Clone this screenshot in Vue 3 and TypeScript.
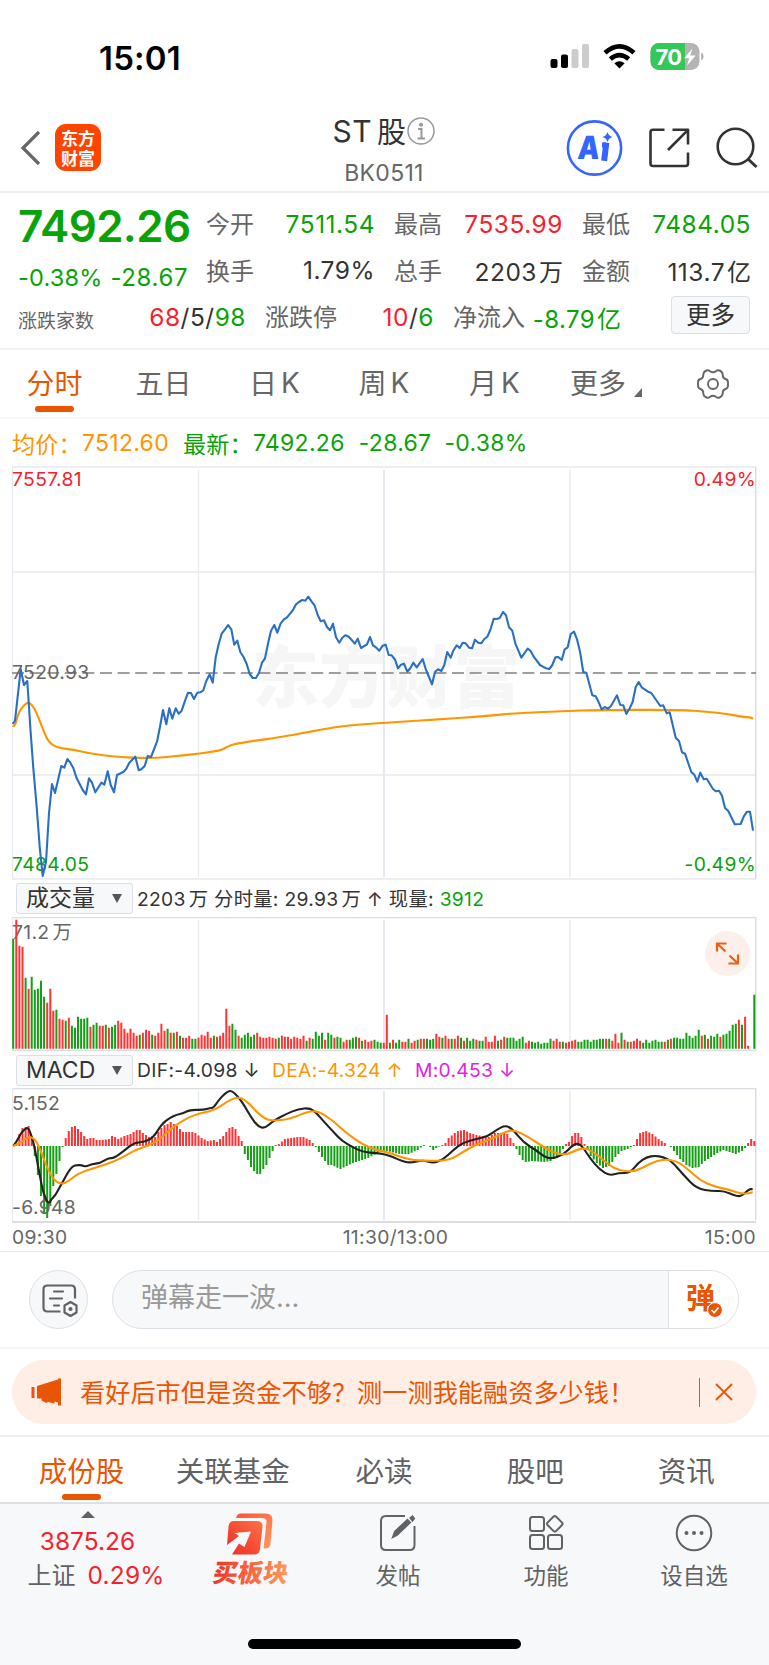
<script setup lang="ts">
interface Metric { label: string; value: string; unit?: string; tone: string }

const metrics: Metric[] = [
  { label: '今开', value: '7511.54', tone: 'down' },
  { label: '最高', value: '7535.99', tone: 'up' },
  { label: '最低', value: '7484.05', tone: 'down' },
  { label: '换手', value: '1.79%', tone: 'ink' },
  { label: '总手', value: '2203', unit: '万', tone: 'ink' },
  { label: '金额', value: '113.7', unit: '亿', tone: 'ink' },
]

const pricePoints = '12.7,724 15,720.7 20.7,669.3 24,685 27.3,681 30.7,733 33.3,768 36.7,807 39.7,847 42.7,876 46,862 49,813 52,784 55,793 61.3,766 64.3,767.7 67.3,759 70.3,762.7 73.3,768 76.7,778.3 82.7,790 86,794.3 89,778.3 92,782.7 95.3,792.3 101.3,782.7 104.3,784.7 107.7,771.3 110.7,785 114,792.3 117,775 123.3,772 126.3,768.7 129.3,762.7 135.3,756.7 138.7,770.3 141.3,769.3 144.7,766 147.7,756 151,757 157,741.7 160,726.7 163,710 166.3,724.3 169.3,708.3 172.3,718.7 175.7,708.3 178.7,713.7 181.7,710.7 184.7,701.7 188,692.7 191,693 194,699 197.3,692.7 200.3,692.3 203.3,690.3 206.3,681 209.7,674.3 212.7,682.7 215.7,657.3 218.7,644 221.7,633.7 225,629.3 228,625 231.3,629.3 234.3,644.7 237.3,640.7 240.3,652 243.7,657.3 246.7,664 249.7,674 252.7,678 256,678 259,672.7 262,662.7 265,658.3 268.3,642.3 271,630.7 274.3,625 277.3,632.7 280.7,623.3 283.7,619.7 287,617.3 293,610 296,604.3 299,602 302.3,600 305.3,600.7 308.3,596.7 311.7,601.7 314.7,605.7 317.7,615 320.7,621.3 324,620.3 327,627 330,630.3 333,623.7 336,637.3 339.3,642.7 342.3,637.7 345.3,635.3 348.7,636.7 351.7,640 354.7,643.7 357.7,638.7 361,648 367,644.3 370,637 373,645.3 376.3,647.7 379.3,650.7 382.7,645.7 385.7,644.7 388.7,655 391.7,655.3 395,659.7 398,668.3 401,664.7 404,663.7 407.3,671.7 410.3,668.3 413.3,662.7 416.7,667.3 422.7,659 425.7,669 432,684.3 435,672 438,669.3 441.3,671 444.3,665 447.3,652 450.7,657.7 453.3,650.7 456.7,645.3 459.7,648 462.7,642.7 465.7,643.3 469,647.7 472,648.3 475,639.7 478.3,642.7 481.3,643.3 484.3,639 487.3,636.7 490.3,630 493.7,618.7 496.7,619 499.7,618 503,612 506,615.3 509,627.3 512.3,630.7 515.3,643.3 521.3,657.7 527.7,648.7 530.7,651 533.7,656.7 540,665 543,666.7 546,668.3 549.3,669 552.3,665 555.3,657.3 558.3,657 561.7,660 564.7,649.3 567.7,647.3 570.7,634 574,631.7 577,639.3 580,651.7 583.3,672 586.3,672.7 592.3,695.3 595.7,696.3 598.7,702.3 601.7,709.3 604.7,707 608,708.7 611,706 617,695.3 620.3,705 623.3,705.3 626.3,714 629.7,708.3 632.7,701.7 635.7,687 638.7,682 641.7,687.3 648,691.7 651.3,693 660.3,706 663.3,705.3 666.7,713.3 669.7,712.3 675.7,737.7 679,741 682,752.3 685,753.7 691.3,772 694.3,774.7 697.3,781.7 700.3,772.7 703.7,779.3 706.7,778.7 713,789 716,791.3 719,790.7 722,795.7 725,808 728.3,811 734.7,824.3 740.7,824 743.7,816.7 747,811.7 750,811.7 753,830.7'

const averagePoints = '12.7,725.7 15,727 18.3,712.7 24,705 28.3,702.3 31.7,704.3 36.7,712.7 43.3,730.7 49,742.7 58.3,748 74,749.7 86.7,752.7 103,755.3 121.7,757.3 140,758 156.7,758 176.7,756 198.3,753.7 215,751.3 221.7,750 226.7,747 235,743.7 260,740 274,738.3 313.3,731.3 333.3,727.3 356.7,724.7 384,722.7 433.3,719.7 490,715.7 516.7,713 570,711 593.3,710 680,709.7 706.7,711.7 726.7,713.7 743.3,717 750,717.3 753,718.7'

const difPoints = '13.3,1146 16.7,1141.7 20.7,1133.3 24,1130 27.7,1127.3 30,1131.7 33.3,1141.7 36.7,1158.3 40,1176.7 43.3,1193.3 48.3,1204.3 51.7,1199 55,1195.7 60,1186.7 63.3,1180.7 68.3,1171.7 72.7,1166 77.3,1165 81.7,1165.3 86,1166.7 91.7,1164 100,1163.3 108.3,1158 114,1158.3 125,1150 134,1142.7 143.3,1142.3 153.3,1137.7 161.7,1124 170,1117.7 176.7,1114.7 183.3,1113.3 190,1109.7 203.3,1110 210,1108 213.3,1108 218.3,1100.7 223.3,1095 228.3,1091.3 231.7,1090.7 238.3,1096.7 245,1106.7 251.7,1118.3 258.3,1126.7 265,1128.3 273.3,1120.7 286.7,1113.7 298.3,1109 310,1108 316.7,1113.3 323.3,1121 333.3,1131.7 341.7,1140.7 353.3,1147.7 363.3,1152 376.7,1153.3 385,1154.3 393.3,1157.3 401.7,1161 410,1163 423.3,1160 433.3,1163.3 443.3,1159.3 453.3,1150 463.3,1142.3 476.7,1139 488.3,1136 496.7,1129.7 505.7,1125 513.3,1130 523.3,1142.3 536.7,1150.7 543.3,1156 550.7,1159 563.3,1155 571.7,1146 577.3,1143 582.7,1146.7 590,1158.3 600,1170 610,1175.7 618.3,1173 630,1173 638.3,1162.7 646.7,1157 655,1155.7 663.3,1157 671.7,1161.3 683.3,1174.7 696.7,1188.7 713.3,1191.3 723.3,1190.7 736.7,1196.3 741.7,1196 749.3,1189 752.7,1189.3'

const deaPoints = '13.3,1146 20,1143.3 26.7,1138 31.7,1136.7 36.7,1141.7 41.7,1153.3 46.7,1166.7 53.3,1179.3 60,1184 66.7,1182.7 78.3,1173.3 96.7,1167.3 115,1161.3 126.7,1155 136.7,1149.3 150,1145 160,1139 168.3,1131 178.3,1123.3 193.3,1115 215,1110 226.7,1101.7 236.7,1097 245,1099.3 253.3,1108.3 263.3,1118.3 273.3,1121 290,1119 310,1110.7 320,1112 333.3,1121 346.7,1133.3 363.3,1145 376.7,1150 389.3,1152.7 400,1156.7 413.3,1160.3 433.3,1161 450,1160 463.3,1151.7 476.7,1144.3 493.3,1138 506.7,1131 515,1130.3 526.7,1136 546.7,1149 556.7,1153.7 566.7,1154.7 576.7,1149.7 585,1148 593.3,1151.7 610,1165.7 620,1170.7 635,1171.7 650,1163.7 663.3,1159 676.7,1161 686.7,1168 700,1180.3 713.3,1186.3 730,1190 740,1193.3 746.7,1193.7 752.7,1192.3'

// Smooth a list of points through their midpoints.
function smooth(points: string): string {
  const p = points.split(' ').map(s => s.split(',').map(Number))
  let d = `M${p[0][0]} ${p[0][1]}`
  for (let i = 1; i < p.length - 1; i++) {
    const mx = (p[i][0] + p[i + 1][0]) / 2
    const my = (p[i][1] + p[i + 1][1]) / 2
    d += `Q${p[i][0]} ${p[i][1]} ${mx} ${my}`
  }
  const last = p[p.length - 1]
  return `${d}L${last[0]} ${last[1]}`
}

// One bar per minute; positive bars rose, negative bars fell.
const volumes: number[] = [
  -110, 129, 103, 102, -71, 60, -72, -59, -60, -68, -52, 46, 60, 38, -39, 30, 29, -28, 31, -23,
  -21, -32, -30, -30, -31, 22, -24, -26, 23, 23, -24, 21, -22, -24, 28, 26, 20, 16, 20, 16,
  13, -14, 16, 19, 18, -14, 13, 16, 25, 18, -20, 16, -16, 17, -13, 11, 11, 13, -10, -10,
  11, 14, 13, 17, 11, -13, 12, 13, 16, 40, 23, -25, -19, 13, -11, -14, -16, -12, -14, 16,
  12, 11, 11, 12, 11, 10, -11, 13, 12, 12, 10, 12, 11, 10, 13, -8, 11, -10, -17, -13,
  -16, 9, -16, -14, 11, -12, -11, 7, 9, -9, -11, -12, 11, -8, 9, 7, 8, -9, -7, -6,
  6, 34, -6, 9, -6, -9, 7, 7, -10, 6, 8, -9, 10, 10, -10, -9, -10, 15, 12, -11,
  13, 10, -10, 10, 13, -11, 8, -11, -8, -10, 9, -8, -8, 12, 7, 7, 13, -8, 9, 12,
  -11, -11, -11, -8, -10, -12, 6, 8, -7, -6, -7, -5, -6, -6, -10, 8, 10, 7, -7, 6,
  7, 8, 9, -7, -7, -9, -9, -7, -9, -9, -10, -10, 10, -10, 8, 15, 6, -16, 9, -7,
  7, 8, 10, 8, -6, -9, -6, -8, -9, -7, -7, 7, -9, 10, -11, -11, -10, -10, -16, -13,
  -11, -13, -19, 13, -14, 10, -13, -12, -15, 12, -14, -15, -18, -24, -25, 29, -24, 32, 3, 0,
  -54,
]

// [minute, height] pairs; minutes in between are interpolated.
const macdKeys: number[][] = [
  [0, 0], [1, 3], [2, 12], [3, 18], [4, 19], [5, 20], [6, 10], [7, -10], [8, -29], [9, -50], [10, -68], [11, -72],
  [12, -60], [13, -40], [14, -28], [15, -15], [16, -1], [17, 8], [18, 15], [19, 19], [20, 20], [21, 17], [22, 14],
  [23, 10], [24, 7], [25, 8], [26, 8], [27, 6], [29, 6], [31, 7], [32, 10], [33, 9], [34, 7], [36, 10], [38, 12],
  [40, 16], [41, 16], [42, 13], [44, 9], [45, 10], [46, 9], [47, 14], [48, 18], [49, 21], [50, 22], [51, 24],
  [53, 20], [55, 14], [58, 14], [59, 13], [61, 8], [63, 5], [65, 6], [66, 4], [68, 10], [70, 18], [71, 19],
  [72, 17], [73, 10], [74, 5], [74.5, -1], [75, -8], [76, -14], [77, -21], [78, -25], [79, -28], [80, -28],
  [81, -23], [82, -19], [83, -12], [84, -5], [85, 1], [86, 2], [88, 7], [90, 8], [92, 9], [94, 9], [96, 6],
  [97, 3], [98, -1], [99, -6], [100, -11], [102, -19], [103, -19], [106, -23], [108, -20], [110, -17], [112, -15],
  [115, -12], [118, -7], [121, -5], [125, -8], [128, -8], [131, -4], [133, 1], [134, 0], [135, -1], [136, -4],
  [137, -2], [139, 1], [140, 3], [141, 8], [143, 13], [144, 15], [146, 16], [148, 13], [150, 11], [154, 9],
  [156, 13], [159, 13], [160, 12], [161, 8], [162, 3], [163, -3], [164, -9], [165, -14], [166, -16], [168, -15],
  [172, -16], [174, -15], [176, -11], [178, -3], [179, 2], [180, 4], [181, 10], [182, 13], [183, 13], [184, 9],
  [185, 2], [186, -3], [187, -10], [189, -17], [191, -22], [193, -20], [194, -16], [195, -11], [197, -5],
  [199, -3], [200, -1], [201, 1], [202, 7], [203, 13], [205, 15], [207, 12], [209, 7], [211, 3], [212, 0],
  [213, -1], [214, -5], [216, -13], [218, -19], [220, -22], [222, -21], [224, -15], [226, -11], [228, -7],
  [230, -4], [232, -6], [234, -8], [236, -5], [237, -2], [238, 3], [239, 7], [240, 5],
]

const minuteWidth = 3.088
const barX = (i: number): number => 13.2 + i * minuteWidth

function barPath(values: number[], rising: boolean, base: number, mirrored: boolean): string {
  let d = ''
  values.forEach((v, i) => {
    if (v === 0 || v > 0 !== rising) return
    const top = mirrored ? base - v : base - Math.abs(v)
    d += `M${barX(i).toFixed(1)} ${base}V${top.toFixed(1)}`
  })
  return d
}

const macdBars: number[] = Array.from({ length: 241 }, (_, i) => {
  const next = macdKeys.findIndex(k => k[0] >= i)
  const [x1, y1] = macdKeys[next]
  if (x1 === i) return y1
  const [x0, y0] = macdKeys[next - 1]
  return y0 + ((y1 - y0) * (i - x0)) / (x1 - x0)
})

const volumeUp = barPath(volumes, true, 1048.7, false)
const volumeDown = barPath(volumes, false, 1048.7, false)
const macdUp = barPath(macdBars, true, 1146, true)
const macdDown = barPath(macdBars, false, 1146, true)
const pageTabs = ['成份股', '关联基金', '必读', '股吧', '资讯']
</script>

<template>
  <main class="screen">
    <div class="status">
      <span class="clock">15:01</span>
      <svg class="signals" width="160" height="36" viewBox="548 40 160 36">
        <rect x="551.5" y="60" width="7" height="9" rx="2" />
        <rect x="562" y="55.5" width="7" height="13.5" rx="2" />
        <rect x="572.500" y="50" width="7" height="19" rx="2" fill="#ccc" />
        <rect x="583" y="45" width="7" height="24" rx="2" fill="#ccc" />
        <g fill="none" stroke="#000" stroke-width="4.600">
          <path d="M606 53.800Q620.500 40.800 635 53.800" />
          <path d="M611.300 60Q620.500 52.200 629.700 60" />
        </g>
        <path d="M620.500 69.500L615.300 64.300Q620.500 60.200 625.700 64.300Z" />
        <clipPath id="battery"><rect x="651.500" y="44" width="49" height="27" rx="8.500" /></clipPath>
        <g clip-path="url(#battery)">
          <rect x="651" y="44" width="50" height="27" fill="#b4b4b4" />
          <rect x="651" y="44" width="35" height="27" fill="#34c759" />
        </g>
        <path d="M702.300 53.500Q704.500 54.500 704.500 57.500T702.300 61.500Z" fill="#aaa" />
        <text x="656.500" y="65.500" class="battery-text">70</text>
        <path d="M693.500 49.500L685 59.200H690.200L688 66.500L696.700 56.500H691.200Z" fill="#fff" />
      </svg>
    </div>

    <header class="header">
      <div class="brand">
        <svg width="22" height="38" viewBox="0 0 22 38"><path d="M20 3L4 19L20 35" fill="none" stroke="#666" stroke-width="3.200" /></svg>
        <div class="logo"><span>东方</span><span>财富</span></div>
      </div>
      <div class="title">
        <div class="name">ST<span class="gu">股</span>
          <svg width="28" height="28" viewBox="0 0 28 28" fill="none" stroke="#999" stroke-width="1.500">
            <circle cx="14" cy="14" r="13" />
            <circle cx="14" cy="7.800" r="1.300" fill="#999" />
            <path d="M11 12H14.500V21M10.500 21.500H18" stroke-width="2" />
          </svg>
        </div>
        <div class="code">BK0511</div>
      </div>
      <svg class="actions" width="202" height="60" viewBox="560 118 202 60" fill="none">
        <circle cx="594.500" cy="148" r="26.600" stroke="#36f" stroke-width="2.600" />
        <text transform="translate(577 158.500) skewX(-5) scale(0.86 1)" class="ai">A</text>
        <path d="M606 145.500L604.500 158" stroke="#36f" stroke-width="6" stroke-linecap="square" />
        <path d="M602 145H606" stroke="#36f" stroke-width="5" />
        <path d="M607.500 132Q608.500 136 612.500 137Q608.500 138 607.500 142Q606.500 138 602.500 137Q606.500 136 607.500 132Z" fill="#36f" />
        <g stroke="#333" stroke-width="2.600" stroke-linejoin="round">
          <path d="M664.500 129.800H653Q650.500 129.800 650.500 132.300V163.500Q650.500 166 653 166H685.500Q688 166 688 163.500V152.500" />
          <path d="M672.500 129.800H688V144.500M688 129.800L668 150" />
          <circle cx="735.500" cy="146.500" r="17.800" />
          <path d="M748 159L756.500 167" stroke-width="3" />
        </g>
      </svg>
    </header>

    <section class="quote">
      <div class="quote-top">
        <div class="last">
          <div class="price">7492.26</div>
          <div class="change"><span class="pct">-0.38%</span><span>-28.67</span></div>
        </div>
        <div class="metrics">
          <div v-for="m in metrics" :key="m.label" class="metric">
            <span class="muted">{{ m.label }}</span>
            <span :class="['value', m.tone]">{{ m.value }}<i v-if="m.unit" class="unit">{{ m.unit }}</i></span>
          </div>
        </div>
      </div>
      <div class="quote-bottom">
        <div class="metric"><span class="muted small">涨跌家数</span><span class="ink value"><b class="up">68</b>/5/<b class="down">98</b></span></div>
        <div class="metric"><span class="muted">涨跌停</span><span class="ink value"><b class="up">10</b>/<b class="down">6</b></span></div>
        <div class="metric"><span class="muted">净流入</span><span class="down flow">-8.79<i class="unit">亿</i></span></div>
        <button class="more">更多</button>
      </div>
    </section>

    <nav class="periods">
      <span class="period active">分时</span>
      <span class="period">五日</span>
      <span class="period">日<i>K</i></span>
      <span class="period">周<i>K</i></span>
      <span class="period">月<i>K</i></span>
      <span class="period more-period">更多<svg class="corner" width="8" height="9" viewBox="0 0 8 9"><path d="M8 0V9H0Z" fill="#666" /></svg></span>
      <span class="period gear">
        <svg width="34" height="34" viewBox="-17 -17 34 34" fill="none" stroke="#666" stroke-width="1.900" stroke-linejoin="round">
          <path d="M-6.500 -13.500Q-4.500 -14.300 -3 -12.800Q0 -10.800 3 -12.800Q4.500 -14.300 6.500 -13.500Q9.500 -12.300 9.700 -9.500Q9.500 -6 12.500 -5Q15 -4.300 15 -1.500V1.500Q15 4.300 12.500 5Q9.500 6 9.700 9.500Q9.500 12.300 6.500 13.500Q4.500 14.300 3 12.800Q0 10.800 -3 12.800Q-4.500 14.300 -6.500 13.500Q-9.500 12.300 -9.700 9.500Q-9.500 6 -12.500 5Q-15 4.300 -15 1.500V-1.500Q-15 -4.300 -12.500 -5Q-9.500 -6 -9.700 -9.500Q-9.500 -12.300 -6.500 -13.500Z" />
          <circle r="5" />
        </svg>
      </span>
    </nav>

    <div class="legend">
      <span class="avg">均价：</span><span class="avg n1">7512.60</span><span class="down">最新：</span>
      <span class="down n2">7492.26</span><span class="down n3">-28.67</span><span class="down n4">-0.38%</span>
    </div>

    <svg class="chart" width="769" height="414" viewBox="0 466 769 414">
      <text x="386" y="702" class="watermark">东方财富</text>
      <g class="grid">
        <path d="M12 467H756M12 572H756M12 775H756M12 879H756" />
        <path d="M12.500 467V879M198.500 470V877M570 470V877" />
        <path d="M384 470V877" stroke-width="2" />
        <path d="M755.700 467V879" stroke="#d5d8df" />
      </g>
      <path d="M12 673H756" stroke="#808080" stroke-width="1.600" stroke-dasharray="12 5.600" />
      <text x="12" y="678.500" class="label">7520.93</text>
      <text x="12" y="486" class="label up">7557.81</text>
      <text x="756" y="486" class="label end up">0.49%</text>
      <text x="12" y="871" class="label down">7484.05</text>
      <text x="756" y="871" class="label end down">-0.49%</text>
      <path :d="smooth(averagePoints)" class="line" stroke="#ff9500" />
      <polyline :points="pricePoints" class="line" stroke="#2a70c2" />
    </svg>

    <div class="indicator">
      <button class="select"><span>成交量</span><svg width="10" height="9" viewBox="0 0 10 9"><path d="M0 0H10L5 9Z" fill="#555" /></svg></button>
      <span class="detail">2203<em>万</em> 分时量: 29.93<em>万</em> ↑ 现量: <b class="down">3912</b></span>
    </div>
    <svg class="chart" width="769" height="136" viewBox="0 917 769 136">
      <g class="grid">
        <path d="M12 917.500H756M12 1050.500H756" stroke="#dcdee4" />
        <path d="M12.500 917V1050M198.500 920V1049M570 920V1049" />
        <path d="M384 920V1049" stroke-width="2" />
        <path d="M755.700 917V1050" stroke="#d5d8df" />
      </g>
      <text x="12" y="938.500" class="label">71.2<tspan dx="3">万</tspan></text>
      <path :d="volumeUp" stroke="#f33" stroke-width="2" />
      <path :d="volumeDown" stroke="#14a014" stroke-width="2" />
      <circle cx="727.500" cy="953.500" r="22.500" fill="#fdf0ea" />
      <path d="M717 951.500V943.500H726.500M717.500 944L725.500 951.500M728.500 963.500H738V954.500M737.500 963L729.500 955.500" fill="none" stroke="#ee6011" stroke-width="2.200" />
    </svg>

    <div class="indicator macd">
      <button class="select"><span>MACD</span><svg width="10" height="9" viewBox="0 0 10 9"><path d="M0 0H10L5 9Z" fill="#555" /></svg></button>
      <span class="detail"><span class="dif">DIF:-4.098 ↓</span><span class="avg dea">DEA:-4.324 ↑</span><span class="mag">M:0.453 ↓</span></span>
    </div>
    <svg class="chart" width="769" height="163" viewBox="0 1088 769 163">
      <g class="grid">
        <path d="M12 1088.500H756" stroke="#d8dce3" />
        <path d="M12 1222H756" stroke="#dcdde0" stroke-width="2" />
        <path d="M12.500 1088V1221M198.500 1091V1220M570 1091V1220" />
        <path d="M384 1091V1220" stroke-width="2" />
        <path d="M755.700 1088V1220" stroke="#d5d8df" />
      </g>
      <path :d="macdUp" stroke="#f33" stroke-width="2" />
      <path :d="macdDown" stroke="#14a014" stroke-width="2" />
      <text x="12" y="1110" class="label">5.152</text>
      <text x="12" y="1213.500" class="label">-6.948</text>
      <path :d="smooth(difPoints)" class="line" stroke="#222" />
      <path :d="smooth(deaPoints)" class="line" stroke="#ff9500" />
      <text x="12" y="1244" class="label">09:30</text>
      <text x="395.500" y="1244" class="label mid">11:30/13:00</text>
      <text x="756" y="1244" class="label end">15:00</text>
    </svg>

    <section class="comment">
      <div class="round">
        <svg width="38" height="38" viewBox="40 1281 38 38" fill="none" stroke="#606266" stroke-width="2.200">
          <path d="M60.500 1311.500H47.500Q43.500 1311.500 43.500 1307.500V1289.500Q43.500 1285.500 47.500 1285.500H71Q75 1285.500 75 1289.500V1298.500" />
          <path d="M54 1291.500H63M50 1298.500H62M54 1305.500H59" stroke-linecap="round" />
          <path d="M70.500 1302L76.500 1305.500V1312.500L70.500 1316L64.500 1312.500V1305.500Z" stroke-linejoin="round" />
          <circle cx="70.500" cy="1309" r="1" />
        </svg>
      </div>
      <div class="field">
        <span class="placeholder">弹幕走一波...</span>
        <span class="send">弹
          <svg class="check" width="16" height="16" viewBox="0 0 16 16"><circle cx="8" cy="8" r="7.400" fill="#ea5504" stroke="#fff" /><path d="M4.500 8L7.200 10.700L11.500 5.500" fill="none" stroke="#fff" stroke-width="1.700" /></svg>
        </span>
      </div>
    </section>

    <section class="promo">
      <svg width="32" height="28" viewBox="31 1378 32 28" fill="#ea5504">
        <path d="M31.500 1387H34.500V1398H31.500ZM37 1386L58 1379.500V1378.500H61V1405.500H58V1402.500L54.500 1401.500V1403.500L48 1402L46.500 1403L41.500 1400.500V1398.500H37Z" />
      </svg>
      <span class="promo-text">看好后市但是资金不够？测一测我能融资多少钱！</span>
      <span class="promo-line"></span>
      <svg width="18" height="18" viewBox="0 0 18 18"><path d="M1 1L17 17M17 1L1 17" stroke="#ea5504" stroke-width="1.800" /></svg>
    </section>

    <nav class="page-tabs">
      <span v-for="(t, i) in pageTabs" :key="t" :class="{ active: i === 0 }">{{ t }}</span>
    </nav>

    <footer class="toolbar">
      <div class="index">
        <svg width="14" height="7" viewBox="0 0 14 7"><path d="M7 0L14 7H0Z" fill="#606266" /></svg>
        <span class="up index-value">3875.26</span>
        <span class="index-name">上证<b class="up">0.29%</b></span>
      </div>
      <div class="tool buy">
        <svg width="100" height="84" viewBox="201 1511 100 84">
          <defs>
            <linearGradient id="warm" x1="0" y1="0" x2="1" y2="0"><stop offset="0" stop-color="#ef3427" /><stop offset="1" stop-color="#ff9a56" /></linearGradient>
            <linearGradient id="back" x1="0" y1="0" x2="1" y2="1"><stop offset="0" stop-color="#ff5435" /><stop offset="1" stop-color="#ff9a60" /></linearGradient>
            <linearGradient id="front" x1="0" y1="1" x2="1" y2="0"><stop offset="0" stop-color="#ef2b26" /><stop offset="1" stop-color="#fb7245" /></linearGradient>
          </defs>
          <path d="M237 1518L238 1515.500Q239 1513.500 241.500 1513.500H267Q273.500 1513.500 273.500 1520L271.500 1544Q271 1549 264.500 1548.500L267.500 1522.500Q268 1518 263 1518Z" fill="url(#back)" />
          <path d="M235 1521H258Q264 1521 263.500 1527L261 1549Q260.500 1554.500 255 1554.500H233L240 1543.500L245.500 1547L252 1531.500L235.500 1533L240 1536L228 1545L229.500 1527Q230 1521 235 1521Z" fill="url(#front)" />
          <text transform="translate(213 1582) skewX(-8)" class="buy-text" fill="url(#warm)">买板块</text>
        </svg>
      </div>
      <div class="tool">
        <svg width="38" height="38" viewBox="380 1515 38 38" fill="none" stroke="#606266" stroke-width="2">
          <path d="M406 1517H387Q382 1517 382 1522V1546Q382 1551 387 1551H410.500Q415.500 1551 415.500 1546V1527" />
          <path d="M394 1538L396 1532.500L408.500 1521L411 1523.500L398 1536Z" fill="#606266" stroke="#606266" />
          <path d="M411.500 1519L413.500 1517.500L415 1519.500L413.500 1521.500Z" fill="#606266" />
        </svg>
        <span>发帖</span>
      </div>
      <div class="tool">
        <svg width="38" height="38" viewBox="528 1515 38 38" fill="none" stroke="#606266" stroke-width="2" stroke-linejoin="round">
          <rect x="531" y="1518" width="14" height="14" rx="2.500" /><rect x="531" y="1536" width="14" height="14" rx="2.500" /><rect x="549" y="1536" width="14" height="14" rx="2.500" />
          <rect x="549.800" y="1518.800" width="12" height="12" rx="2" transform="rotate(45 555.800 1524.800)" />
        </svg>
        <span>功能</span>
      </div>
      <div class="tool">
        <svg width="38" height="38" viewBox="0 0 38 38"><circle cx="19" cy="19" r="17.300" fill="none" stroke="#606266" stroke-width="2" /><g fill="#606266"><circle cx="11.500" cy="19" r="2" /><circle cx="19" cy="19" r="2" /><circle cx="26.500" cy="19" r="2" /></g></svg>
        <span>设自选</span>
      </div>
    </footer>
    <div class="home"><span></span></div>
  </main>
</template>

<style>
body { margin: 0; background: #fff; }
</style>

<style scoped>
* { box-sizing: border-box; }
.screen { width: 769px; height: 1665px; overflow: hidden; background: #fff; color: #333; font-family: Inter, "Noto Sans CJK SC", sans-serif; white-space: nowrap; }
svg { display: block; flex: none; }
b, i, em { font-weight: inherit; font-style: normal; }
button { font: inherit; color: inherit; padding: 0; }
.up { color: #f5222d; fill: #f5222d; }
.down { color: #09a309; fill: #09a309; }
.ink { color: #333; }
.muted { color: #666; }
.avg { color: #ff9500; }
.mag { color: #e21fe2; }

.status { height: 106px; display: flex; align-items: center; padding: 8px 62px 0 99px; justify-content: space-between; }
.clock { font-size: 33px; font-weight: 600; color: #000; letter-spacing: 0.200px; padding-top: 2px; }
.battery-text { font: 700 22px Inter, sans-serif; fill: #fff; letter-spacing: -0.600px; }

.header { height: 87px; border-bottom: 2px solid #eee; display: grid; grid-template-columns: 202px 1fr 202px; align-items: center; padding: 0 7px 0 19px; }
.brand { display: flex; align-items: center; gap: 14px; margin-top: -2px; }
.actions { margin-top: -2px; }
.logo { width: 46px; height: 47px; border-radius: 11px; background: #ff4400; color: #fff; font: 700 17px/20px "Noto Sans CJK SC", sans-serif; display: flex; flex-direction: column; align-items: center; justify-content: center; }
.title { display: flex; flex-direction: column; align-items: center; padding-right: 13px; }
.name { display: flex; align-items: center; height: 42px; font-size: 30px; padding-top: 8px; margin-top: -1px; letter-spacing: 0.400px; }
.gu { font-size: 29px; margin: -2px 1px 0 5px; }
.code { height: 43px; line-height: 32px; padding-top: 9px; font-size: 23px; color: #666; letter-spacing: 0.300px; }
.ai { font: 900 32px Inter, sans-serif; fill: #36f; }

.quote { height: 157px; padding: 8px 19px 0 18px; border-bottom: 2px solid #f2f2f3; font-size: 24px; }
.quote-top { display: flex; gap: 19px; height: 93px; }
.last { width: 169px; color: #09a309; }
.price { height: 50px; line-height: 50px; font-size: 44px; font-weight: 600; letter-spacing: -0.700px; }
.change { height: 43px; padding-top: 9px; line-height: 35px; display: flex; gap: 8px; letter-spacing: 0.600px; }
.pct { font-size: 23.500px; letter-spacing: 0.200px; }
.metrics { display: grid; grid-template-columns: repeat(3, 169px); column-gap: 19px; grid-auto-rows: 46.500px; }
.metric { display: flex; justify-content: space-between; align-items: center; height: 46px; }
.metric .muted { padding-bottom: 3px; }
.metric .value { padding-bottom: 1px; font-size: 24.500px; letter-spacing: 0.500px; }
.unit { margin-left: 2px; font-size: 24px; letter-spacing: 0; }
.quote-bottom { display: grid; grid-template-columns: 228px 169px 169px 1fr; column-gap: 19px; height: 46px; align-items: center; }
.metric .small { font-size: 19px; padding-top: 4px; padding-bottom: 0; }
.flow { padding-top: 1px; margin-right: 1px; letter-spacing: 0.400px; }
.more { width: 79px; height: 38px; margin-top: -4px; margin-left: 30px; border: 1px solid #dcdfe6; border-radius: 4px; background: #f7f8fa; font-size: 24.500px; line-height: 36px; }

.periods { height: 69px; border-bottom: 2px solid #f6f6f7; display: grid; grid-template-columns: 109px 109px 113px 106px 115px 108px 109px; align-items: stretch; font-size: 28px; color: #666; }
.period { display: flex; align-items: center; justify-content: center; position: relative; padding-bottom: 4px; }
.period.gear { padding: 0 4px 0 0; }
.period i { margin-left: 4px; padding-top: 2px; }
.more-period { justify-content: flex-start; padding-left: 18px; }
.corner { align-self: flex-end; margin: 0 0 16px 8px; }
.active { color: #ea5504; }
.period.active::after, .page-tabs .active::after { content: ""; position: absolute; width: 39px; height: 6px; border-radius: 3px; background: #ea5504; bottom: 5px; left: 50%; margin-left: -20px; }

.legend { height: 47px; padding: 0 0 0 12px; display: flex; align-items: center; font-size: 23px; letter-spacing: 0.300px; }
.n1 { margin-right: 14px; } .n2 { margin-right: 14px; } .n3 { margin-right: 13px; }

.grid { fill: none; stroke: #e6e9f0; stroke-width: 1.300; }
.line { fill: none; stroke-width: 2.100; stroke-linejoin: round; }
.label { font-size: 19.300px; fill: #666; letter-spacing: 0.350px; }
.label.up { fill: #f5222d; } .label.down { fill: #09a309; }
.end { text-anchor: end; } .mid { text-anchor: middle; }
.watermark { font: 900 67px "Noto Sans CJK SC", sans-serif; fill: #f6f6f6; text-anchor: middle; }

.indicator { height: 37px; padding-left: 16px; display: flex; align-items: center; gap: 4px; }
.indicator.macd { height: 35px; }
.select { width: 117px; height: 31px; border: 1px solid #dcdfe6; border-radius: 3px; background: #f7f8fa; display: flex; align-items: center; justify-content: space-between; padding: 0 10px 0 9px; font-size: 23px; line-height: 29px; }
.detail { font-size: 19.300px; white-space: pre; letter-spacing: 0.300px; padding-bottom: 1px; }
.detail em { margin-left: 3px; }
.dea { margin: 0 12px; }

.comment { height: 98px; border-bottom: 2px solid #f5f5f6; border-top: 1px solid #e5e8ee; padding: 0 29px; display: flex; align-items: center; gap: 24px; }
.round { width: 59px; height: 59px; border-radius: 50%; border: 1px solid #dcdfe6; background: #f7f8fa; display: grid; place-items: center; }
.field { width: 627px; height: 59px; border-radius: 30px; border: 1px solid #dcdfe6; background: #f7f8fa; display: flex; overflow: hidden; }
.placeholder { flex: 1; padding-left: 28px; font-size: 27px; line-height: 54px; color: #999; }
.send { width: 70px; border-left: 1px solid #dcdfe6; background: #fff; color: #ea5504; font-size: 29px; font-weight: 700; line-height: 55px; padding-left: 17px; position: relative; }
.check { position: absolute; left: 38px; top: 31px; }

.promo { height: 64px; margin: 11px 13px 11px 12px; padding: 0 23px 0 19px; border-radius: 32px; background: #feeee6; color: #ea5504; display: flex; align-items: center; }
.promo-text { font-size: 25.200px; margin-left: 17px; flex: 1; padding-bottom: 2px; }
.promo-line { width: 1.500px; height: 29px; background: #ea5504; margin-right: 15px; }

.page-tabs { height: 69px; border-top: 2px solid #eee; border-bottom: 2px solid #dfdfe1; display: grid; grid-template-columns: repeat(5, 151.200px); padding-left: 6px; font-size: 28.500px; color: #606266; }
.page-tabs span { display: flex; align-items: center; justify-content: center; position: relative; padding-bottom: 1px; }
.page-tabs .active { color: #ea5504; }
.page-tabs .active::after { bottom: 2px; }

.toolbar { height: 124px; background: #f7f8fa; display: grid; grid-template-columns: 176px 148px 148px 148px 148px; color: #606266; }
.index { display: flex; flex-direction: column; align-items: center; padding-top: 7px; font-size: 24px; padding-left: 16px; }
.index-value { height: 34px; line-height: 34px; margin-top: 6px; font-size: 24.500px; margin-right: 17px; }
.index > svg { margin-right: 16px; }
.index-name { height: 34px; line-height: 34px; }
.index-name b { margin-left: 12px; font-size: 24.500px; letter-spacing: 0.200px; }
.tool { display: flex; flex-direction: column; align-items: center; font-size: 22.500px; padding-top: 10px; }
.tool span { line-height: 30px; margin-top: 9px; }
.buy { padding-top: 7px; }
.buy-text { font: 900 25px "Noto Sans CJK SC", sans-serif; }
.home { height: 40px; background: #f7f8fa; display: flex; justify-content: center; padding-top: 11px; }
.home span { width: 273px; height: 10px; border-radius: 5px; background: #000; }
</style>
